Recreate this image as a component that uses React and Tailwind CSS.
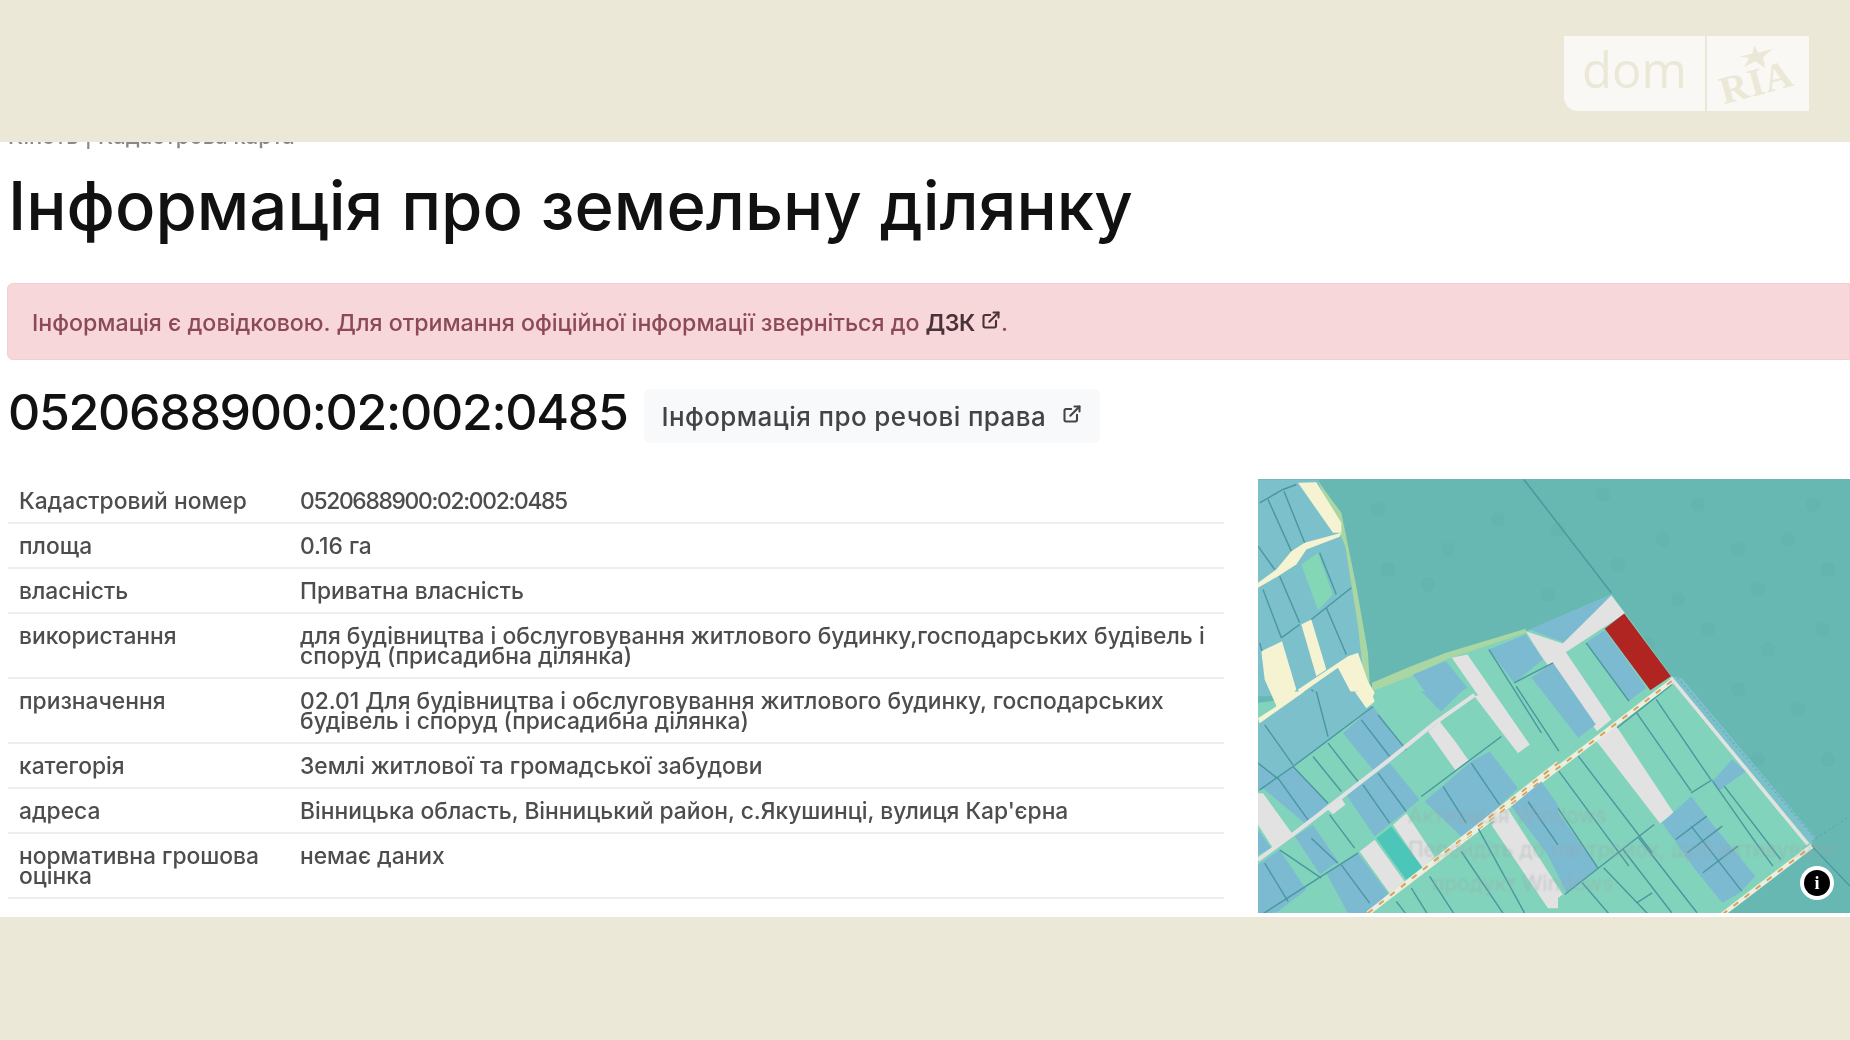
import React from 'react'
import { ExternalLink } from 'lucide-react'

const rows = [
    ['Кадастровий номер', '0520688900:02:002:0485'],
    ['площа', '0.16 га'],
    ['власність', 'Приватна власність'],
    ['використання', 'для будівництва і обслуговування житлового будинку,господарських будівель і споруд (присадибна ділянка)'],
    ['призначення', '02.01 Для будівництва і обслуговування житлового будинку, господарських будівель і споруд (присадибна ділянка)'],
    ['категорія', 'Землі житлової та громадської забудови'],
    ['адреса', 'Вінницька область, Вінницький район, с.Якушинці, вулиця Кар\'єрна'],
    ['нормативна грошова оцінка', 'немає даних'],
]

const GREEN = '#82d3bc'
const BLUE = '#7cbad2'
const TEAL = '#7bc0ca'
const GREY = '#e2e2e2'
const CREAM = '#f5f3d2'
const LINE = '#4a979f'

const trees = [
    [120, 30], [190, 70], [130, 90], [240, 40], [170, 105], [300, 50], [345, 15], [290, 115], [360, 85], [405, 60],
    [440, 25], [480, 70], [420, 120], [500, 110], [530, 60], [555, 25], [570, 90], [390, 165], [450, 150], [510, 170],
    [565, 150], [480, 210], [540, 230], [500, 280], [570, 280],
]

// upper right part, traced over the whole map
const rightPolys = [
    ['340,660 440,615 530,560 735,485 955,375 1110,620 1470,1125 1240,1335 47,1335 47,700', GREEN],
    ['1110,620 1135,625 1480,1105 1470,1125', TEAL],
    ['340,640 440,590 530,550 735,478 735,490 530,570 440,620 340,665', '#a9d6a2'],
    ['745,480 955,375 835,520', BLUE],
    ['735,485 830,522 955,378 990,432 838,548 955,750 918,785 775,560', GREY],
    ['890,520 938,482 1045,655 1000,695', BLUE],
    ['938,478 988,432 1108,620 1055,662', '#b02522'],
    ['750,625 805,580 915,765 870,805', BLUE],
    ['640,540 735,495 780,570 705,640', BLUE],
    ['445,615 530,575 585,655 505,715', BLUE],
    ['545,565 585,555 745,825 715,850', GREY],
    ['915,812 968,770 1115,1030 1080,1062', GREY],
    ['1215,935 1265,870 1300,905 1230,965', BLUE],
    ['1085,1060 1160,980 1215,1065 1325,1220 1285,1270 1240,1300 1170,1200', BLUE],
    ['720,990 770,950 920,1195 840,1270', BLUE],
    ['650,1050 690,1020 830,1275 790,1310', GREY],
]

const rightLines = [
    '730,30 955,370', '890,520 1000,695', '1020,730 1160,965', '1070,690 1210,930', '970,775 1110,645',
    '1160,970 1215,930', '1215,935 1320,1110 1370,1190', '1245,950 1390,1170', '780,950 920,1195',
    '820,905 1000,1190', '870,860 1060,1150', '1120,1110 1200,1040', '1150,1150 1240,1070',
    '1190,1210 1280,1130', '1160,1070 1290,1265', '1025,1105 1175,1330', '985,1140 1110,1330', '935,1195 1050,1335',
    '880,1240 950,1335', '1020,1300 1060,1270', '835,1275 1065,1065', '710,650 820,845', '640,540 775,790',
    '705,640 805,580', '1470,1130 1568,1250',
]

// top left corner, at three times the map's size
const topPolys = [
    ['0,0 180,0 245,110 285,300 320,500 330,605 340,650 0,650', TEAL],
    ['180,5 250,100 295,320 330,520 335,610 318,600 300,440 262,200', '#a9d6a2'],
    ['120,10 175,8 250,130 250,160 225,160', CREAM],
    ['0,310 55,270 100,215 140,190 250,160 245,172 145,210 115,255 60,290 0,325', CREAM],
    ['10,515 72,485 115,630 60,690 20,600', CREAM],
    ['130,435 160,420 205,570 175,590', CREAM],
    ['120,630 270,530 300,520 330,605 350,640 340,660 290,660 240,565 125,645', CREAM],
    ['130,255 180,220 225,345 180,392', '#83d6b6'],
]

const topLines = [
    '5,70 75,30 115,15', '30,60 100,215', '78,35 140,190', '0,200 50,270', '65,290 125,430', '15,330 70,475',
    '185,220 235,345', '205,385 265,525', '160,420 280,325', '70,475 125,435', '5,490 12,515', '160,630 180,650',
]

// lower left part, at three times the map's size
const lowPolys = [
    ['0,95 140,0 300,0 340,45 210,150 105,225 60,260 0,300', TEAL],
    ['50,0 140,0 5,95 0,80 55,45', CREAM],
    ['290,0 340,0 350,30 325,50', CREAM],
    ['255,125 345,45 445,175 345,245', BLUE],
    ['115,225 210,150 255,125 345,235 250,310 210,335', GREEN],
    ['15,290 105,225 210,335 145,400', BLUE],
    ['0,215 60,262 0,300', BLUE],
    ['0,305 15,305 105,430 45,470 0,400', GREY],
    ['0,415 40,470 0,490', BLUE],
    ['0,520 15,510 65,475 145,595 60,660 0,675', BLUE],
    ['265,310 395,215 485,325 350,435', BLUE],
    ['410,205 510,135 585,245 490,315', GREEN],
    ['510,120 545,90 635,205 595,240', GREY],
    ['555,95 650,20 735,130 630,205', GREEN],
    ['650,15 690,0 815,160 780,185', GREY],
    ['345,15 400,0 490,0 535,70 445,145', GREEN],
    ['490,0 610,0 550,60', BLUE],
    ['695,170 735,135 780,185 860,130 900,190 775,285', GREEN],
    ['500,330 640,210 695,180 780,290 620,445', BLUE],
    ['470,350 495,330 580,445 540,485', GREEN],
    ['405,400 445,365 530,495 495,530', GREY],
    ['165,400 225,365 260,345 335,440 250,510', GREEN],
    ['355,440 400,405 495,530 445,565', '#4cc6b8'],
    ['305,480 350,445 440,570 395,605', GREY],
    ['110,435 165,400 240,510 185,550', BLUE],
    ['65,475 110,435 190,555 145,590', GREEN],
    ['205,545 300,485 390,605 335,665 275,675', BLUE],
    ['95,645 190,565 275,675 110,675', GREEN],
    ['700,400 745,365 900,590 900,650 870,650', GREY],
    ['760,345 850,270 900,340 900,530', BLUE],
]

const lowLines = [
    '175,0 210,135', '20,100 105,220', '0,215 60,262', '5,295 105,225 345,45', '310,85 395,195', '360,70 445,175',
    '165,195 250,300', '210,155 300,270', '60,260 150,385', '105,225 210,335', '315,280 395,395', '360,245 445,360',
    '555,285 625,395', '640,215 725,340', '490,315 730,135', '215,370 290,470', '160,440 240,515', '20,515 90,630',
    '250,520 335,635', '65,475 190,560', '10,670 205,545 300,485', '515,555 590,670', '610,480 735,665', '660,410 800,665',
    '460,590 510,670', '415,630 450,675', '810,330 900,460',
]

const LandMap = () => (
    <div className="relative w-[592px] h-[434px] overflow-hidden bg-[#67b7b2] shrink-0">
        <svg viewBox="0 0 592 433" className="block w-full h-full blur-[0.7px]">
            {trees.map(([x, y]) => (
                <circle key={`${x}-${y}`} cx={x} cy={y} r="7" fill="#5eaea9" opacity="0.35" />
            ))}
            <g transform="scale(0.3892 0.3333) translate(-47 -30)">
                {rightPolys.map(([points, fill]) => (
                    <polygon key={points} points={points} fill={fill} />
                ))}
                {rightLines.map(points => (
                    <polyline key={points} points={points} fill="none" stroke={LINE} strokeWidth="1.4" vectorEffect="non-scaling-stroke" />
                ))}
                <polyline points="1108,625 1460,1125" fill="none" stroke={GREY} strokeWidth="3.5" vectorEffect="non-scaling-stroke" />
                <polyline points="1125,625 1480,1110" fill="none" stroke="#5f9ea3" strokeWidth="1" strokeDasharray="2 3" vectorEffect="non-scaling-stroke" />
                <polyline points="1470,1115 1568,1040" fill="none" stroke="#5f9ea3" strokeWidth="1" strokeDasharray="2 3" vectorEffect="non-scaling-stroke" />
                <polyline points="1110,635 325,1335" fill="none" stroke="#eeeedd" strokeWidth="4.5" vectorEffect="non-scaling-stroke" />
                <polyline points="1110,635 325,1335" fill="none" stroke="#d9a25c" strokeWidth="2" strokeDasharray="6 8" vectorEffect="non-scaling-stroke" />
                <polyline points="1240,1335 1470,1130" fill="none" stroke="#eeeedd" strokeWidth="4.5" vectorEffect="non-scaling-stroke" />
                <polyline points="1240,1335 1470,1130" fill="none" stroke="#d9a25c" strokeWidth="2" strokeDasharray="6 8" vectorEffect="non-scaling-stroke" />
            </g>
            <g transform="scale(0.3333)">
                {topPolys.map(([points, fill]) => (
                    <polygon key={points} points={points} fill={fill} />
                ))}
                {topLines.map(points => (
                    <polyline key={points} points={points} fill="none" stroke={LINE} strokeWidth="1.4" vectorEffect="non-scaling-stroke" />
                ))}
            </g>
            <g transform="translate(0 212) scale(0.3333)">
                {lowPolys.map(([points, fill]) => (
                    <polygon key={points} points={points} fill={fill} />
                ))}
                {lowLines.map(points => (
                    <polyline key={points} points={points} fill="none" stroke={LINE} strokeWidth="1.4" vectorEffect="non-scaling-stroke" />
                ))}
                <polyline points="0,505 110,425 220,340 400,200 530,95 650,10" fill="none" stroke={GREY} strokeWidth="4" vectorEffect="non-scaling-stroke" />
                <polygon points="205,350 250,320 262,340 225,368" fill={GREY} />
                <polyline points="330,665 900,215" fill="none" stroke="#eeeedd" strokeWidth="4.5" vectorEffect="non-scaling-stroke" />
                <polyline points="330,665 900,215" fill="none" stroke="#d9a25c" strokeWidth="2" strokeDasharray="6 8" vectorEffect="non-scaling-stroke" />
            </g>
        </svg>
        <div className="absolute left-[150px] top-[320px] text-[21px] leading-[34px] text-[#9aa5a8] opacity-40 blur-[1px] whitespace-nowrap font-['Inter',sans-serif]">
            <div>Активація Windows</div>
            <div>Перейдіть до настройок, щоб активувати</div>
            <div className="pl-6">продукт Windows</div>
        </div>
        <div className="absolute left-[542px] top-[387px] w-[34px] h-[34px] rounded-full bg-white flex items-center justify-center blur-[0.4px]">
            <div className="w-[26px] h-[26px] rounded-full bg-black flex items-center justify-center text-white text-[18px] font-bold font-['Liberation_Serif',serif]">i</div>
        </div>
    </div>
)

const Logo = () => (
    <div className="flex h-[75px] w-[245px] text-[#ebe8d8]">
        <div className="w-[141px] bg-[#f9f8f4] rounded-bl-[14px] flex items-center justify-center text-[49px] leading-none font-medium pb-[8px] font-['Open_Sans',sans-serif]">
            dom
        </div>
        <div className="relative flex-1 ml-[2px] bg-[#f9f8f4] overflow-hidden">
            <svg viewBox="0 0 40 26" className="absolute left-[30px] top-[9px] w-[40px] h-[26px]">
                <polygon points="19,0 22,8 37,6 26,13 27,24 18,16 6,20 12,12 3,9 16,8" fill="#ebe8d8" transform="rotate(-8 20 13)" />
            </svg>
            <div className="absolute left-[12px] top-[26px] -rotate-[15deg] text-[39px] leading-none font-bold tracking-[1px] font-['Liberation_Serif',serif]">RIA</div>
        </div>
    </div>
)

export default function App() {
    return (
        <div className="w-full h-[1040px] flex flex-col bg-[#ebe8d8] overflow-hidden font-['Inter','Liberation_Sans',sans-serif]">
            <div className="h-[142px] shrink-0 flex justify-end items-start pt-[36px] pr-[41px]">
                <Logo />
            </div>
            <div className="h-[775px] shrink-0 bg-white overflow-hidden">
                <div className="-mt-[15px] pl-2 h-[18px] text-[22px] leading-[18px] font-medium text-[#888] blur-[0.6px] whitespace-nowrap">
                    Кіпоть | Кадастрова карта
                </div>
                <h1 className="pl-2 mt-[25px] text-[67px] leading-[72px] font-medium text-[#111] blur-[0.5px] whitespace-nowrap">
                    Інформація про земельну ділянку
                </h1>
                <div className="ml-[7px] mt-[41px] h-[77px] pt-[3px] bg-[#f8d7da] border border-[#f5cdd2] rounded-l-md pl-[24px] flex items-center text-[23.2px] font-medium text-[#8c4a56] blur-[0.5px] whitespace-nowrap">
                    Інформація є довідковою. Для отримання офіційної інформації зверніться до
                    <span className="ml-[6px] font-semibold tracking-[-0.5px] text-[#4a3338]">ДЗК</span>
                    <ExternalLink size={20} strokeWidth={2.5} className="ml-[6px] -mt-[6px] text-[#4a3338]" />
                    <span>.</span>
                </div>
                <div className="pl-2 mt-[25px] flex items-start gap-[16px]">
                    <h2 className="text-[50px] leading-[54px] font-medium tracking-[-1.3px] text-[#111] blur-[0.5px] whitespace-nowrap">0520688900:02:002:0485</h2>
                    <button className="mt-[4px] h-[54px] w-[456px] bg-[#f8f9fa] rounded-md pl-[18px] flex items-center gap-[16px] text-[26px] font-medium tracking-[0.4px] text-[#444] blur-[0.5px] whitespace-nowrap">
                        Інформація про речові права
                        <ExternalLink size={20} strokeWidth={2.5} className="-mt-[4px]" />
                    </button>
                </div>
                <div className="mt-[36px] flex items-start">
                    <div className="ml-2 w-[1216px] mr-[34px] shrink-0 text-[22.8px] leading-[20px] font-medium text-[#4d4d4d] blur-[0.5px]">
                        {rows.map(([label, value], i) => (
                            <div key={label} className="flex py-[11.5px] border-b-2 border-[#eeeeee]">
                                <div className="w-[292px] shrink-0 pl-[11px] pr-4">{label}</div>
                                <div className={i === 0 ? 'flex-1 pr-2 tracking-[-1.3px]' : 'flex-1 pr-2'}>{value}</div>
                            </div>
                        ))}
                    </div>
                    <LandMap />
                </div>
            </div>
        </div>
    )
}
